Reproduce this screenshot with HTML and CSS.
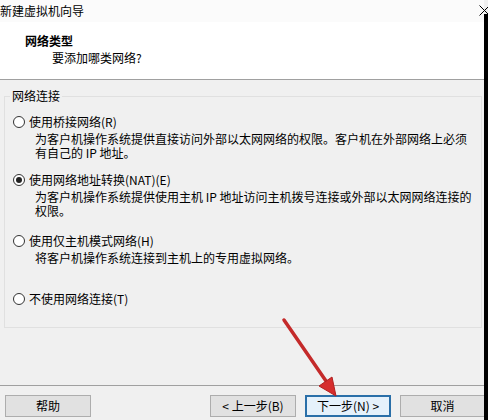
FILE: index.html
```html
<!DOCTYPE html>
<html lang="zh-CN">
<head>
    <meta charset="UTF-8">
    <title>新建虚拟机向导</title>
    <link rel="stylesheet" href="styles.css">
</head>
<body>
    <div class="screen">
        <div class="window">
            <div class="titlebar">
                <span class="title">新建虚拟机向导</span>
                <svg class="close" width="11" height="11" viewBox="0 0 11 11">
                    <path d="M0.5 0.5 L10.5 10.5 M10.5 0.5 L0.5 10.5" stroke="#000" stroke-width="1" fill="none"/>
                </svg>
            </div>

            <div class="header">
                <h1>网络类型</h1>
                <p>要添加哪类网络?</p>
            </div>

            <div class="content">
                <fieldset class="group">
                    <legend>网络连接</legend>

                    <div class="option opt-bridge">
                        <div class="opt-head"><span class="radio"></span>使用桥接网络(R)</div>
                        <div class="opt-desc">为客户机操作系统提供直接访问外部以太网网络的权限。客户机在外部网络上必须<br>有自己的 IP 地址。</div>
                    </div>

                    <div class="option opt-nat">
                        <div class="opt-head"><span class="radio checked"></span>使用网络地址转换(NAT)(E)</div>
                        <div class="opt-desc">为客户机操作系统提供使用主机 IP 地址访问主机拨号连接或外部以太网网络连接的<br>权限。</div>
                    </div>

                    <div class="option opt-host">
                        <div class="opt-head"><span class="radio"></span>使用仅主机模式网络(H)</div>
                        <div class="opt-desc">将客户机操作系统连接到主机上的专用虚拟网络。</div>
                    </div>

                    <div class="option opt-none">
                        <div class="opt-head"><span class="radio"></span>不使用网络连接(T)</div>
                    </div>
                </fieldset>
            </div>

            <div class="footer">
                <button class="btn">帮助</button>
                <div class="nav">
                    <button class="btn">&lt; 上一步(B)</button>
                    <button class="btn default">下一步(N) &gt;</button>
                    <button class="btn cancel">取消</button>
                </div>
            </div>
        </div>
        <div class="edge"></div>

        <!-- red pointer drawn over the screenshot -->
        <svg class="pointer" width="488" height="420" viewBox="0 0 488 420">
            <line x1="284" y1="320" x2="326" y2="381" stroke="#c42a2a" stroke-width="3.5" stroke-linecap="round"/>
            <polygon points="336,396 319,386 332,377" fill="#d62d2d" stroke="#b02020" stroke-width="1"/>
        </svg>
    </div>
</body>
</html>
```

FILE: styles.css
```css
html, body {
    margin: 0;
    padding: 0;
}
body {
    width: 488px;
    height: 420px;
    overflow: hidden;
    font-family: "Noto Sans CJK SC", "Noto Sans", sans-serif;
    font-size: 12px;
    color: #000;
    background: #f0f0f0;
}
.screen {
    position: relative;
    display: flex;
    width: 488px;
    height: 420px;
}
.window {
    width: 484px;
    display: flex;
    flex-direction: column;
    background: #f0f0f0;
}
.edge {
    width: 4px;
    margin-top: 14px;
    background: #000;
}
.titlebar {
    height: 22px;
    line-height: 22px;
    display: flex;
    justify-content: space-between;
    align-items: center;
    background: #fbfbfb;
}
.close {
    margin-right: -6px;
    margin-top: -1px;
}
.header {
    height: 58px;
    background: #fff;
    border-bottom: 1px solid #a0a0a0;
    box-sizing: border-box;
    padding-top: 11px;
}
.header h1 {
    margin: 0 0 1px 25px;
    font-size: 12px;
    font-weight: bold;
    line-height: 16px;
}
.header p {
    margin: 0 0 0 52px;
    line-height: 16px;
}
.content {
    flex: 1;
    padding-top: 8px;
}
.group {
    margin: 0 0 0 4px;
    width: 478px;
    box-sizing: border-box;
    padding: 0 0 20px 5px;
    border: 1px solid #e0e0e0;
}
.group legend {
    padding: 0 2px;
    line-height: 16px;
}
.option {
    display: flex;
    flex-direction: column;
}
.opt-head {
    display: flex;
    align-items: center;
    line-height: 16px;
    gap: 4px;
    padding-left: 3px;
}
.opt-desc {
    margin-top: 2px;
    padding-left: 25px;
    line-height: 14px;
}
.opt-bridge { margin-top: 10px; }
.opt-nat { margin-top: 12px; }
.opt-host { margin-top: 15px; }
.opt-none { margin-top: 26px; }
.radio {
    width: 12px;
    height: 12px;
    box-sizing: border-box;
    border: 1px solid #333;
    border-radius: 50%;
    background: #fff;
    display: flex;
    align-items: center;
    justify-content: center;
}
.radio.checked::after {
    content: "";
    width: 6px;
    height: 6px;
    border-radius: 50%;
    background: #222;
}
.footer {
    height: 35px;
    box-sizing: border-box;
    border-top: 1px solid #a0a0a0;
    padding-top: 9px;
    display: flex;
    justify-content: space-between;
}
.nav {
    display: flex;
    gap: 9px;
}
.btn {
    width: 86px;
    height: 22px;
    margin: 0;
    padding: 0;
    font-family: inherit;
    font-size: 12px;
    color: #000;
    background: #e1e1e1;
    border: 1px solid #adadad;
    line-height: 18px;
}
.footer > .btn {
    margin-left: 5px;
}
.btn.default {
    background: #e5f1fb;
    border: 2px solid #2a6fa8;
}
.btn.cancel {
    width: 84px;
    border-right: none;
}
.pointer {
    position: absolute;
    left: 0;
    top: 0;
    pointer-events: none;
}
```
